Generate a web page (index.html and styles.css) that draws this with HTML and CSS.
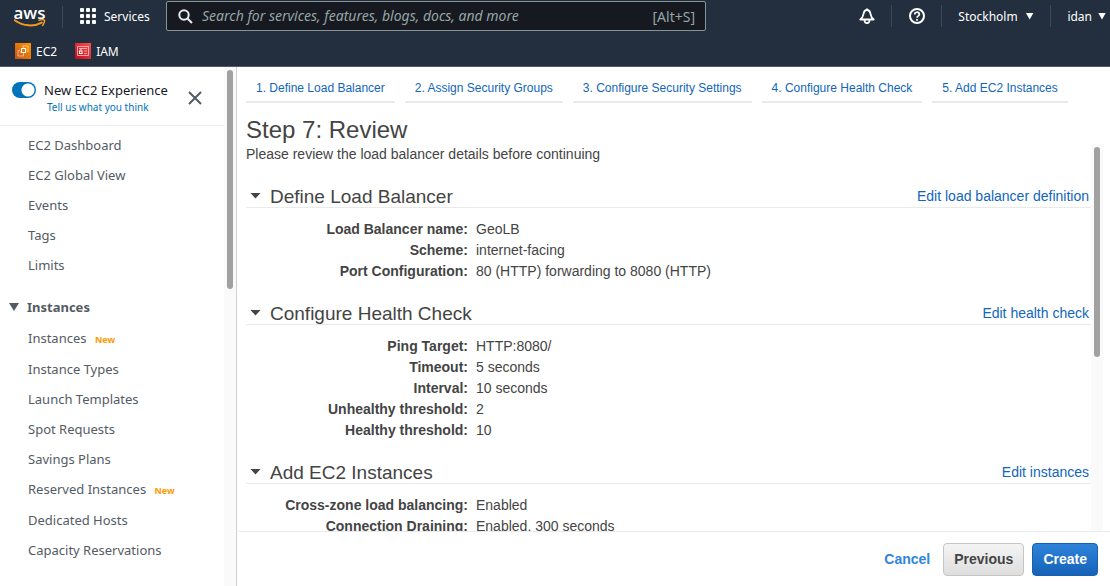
FILE: index.html
```html
<!DOCTYPE html>
<html lang="en">
<head>
<meta charset="utf-8">
<title>Create Load Balancer</title>
<link rel="stylesheet" href="styles.css">
</head>
<body>
<header class="topbar">
  <div class="topbar-main">
    <a class="logo" href="#" aria-label="AWS home">
      <span class="logo-text">aws</span>
      <svg class="logo-smile" viewBox="0 0 32 9" aria-hidden="true"><path d="M.7 1.200C9.500 7.500 20 7.800 27.800 3.600" fill="none" stroke="#f7981d" stroke-width="2" stroke-linecap="round"/><path d="M25 1.300c2.200-.8 4.600-.8 5.300-.2.500.8-.1 3.500-1.700 5.400" fill="none" stroke="#f7981d" stroke-width="1.500" stroke-linecap="round"/></svg>
    </a>
    <button class="services" type="button">
      <svg class="grid-icon" viewBox="0 0 17 17" fill="#fff" aria-hidden="true"><rect width="4" height="4" rx="1"/><rect x="6" width="4" height="4" rx="1"/><rect x="12" width="4" height="4" rx="1"/><rect y="6" width="4" height="4" rx="1"/><rect x="6" y="6" width="4" height="4" rx="1"/><rect x="12" y="6" width="4" height="4" rx="1"/><rect y="12" width="4" height="4" rx="1"/><rect x="6" y="12" width="4" height="4" rx="1"/><rect x="12" y="12" width="4" height="4" rx="1"/></svg>
      <span>Services</span>
    </button>
    <label class="search">
      <svg class="search-icon" viewBox="0 0 15 15" fill="none" stroke="#eaeded" stroke-width="2" aria-hidden="true"><circle cx="6" cy="6" r="4.700"/><path d="M9.500 9.500 14 14"/></svg>
      <input class="search-input" type="text" aria-label="Search" placeholder="Search for services, features, blogs, docs, and more">
      <span class="search-key">[Alt+S]</span>
    </label>
    <nav class="tools" aria-label="Account">
      <button class="tool tool-icon tool-bell" type="button" aria-label="Notifications"><svg viewBox="0 0 16 16" fill="none" stroke="#fff" stroke-width="1.800" stroke-linejoin="round" aria-hidden="true"><path d="M8 .5v1.500M1.300 11.500c1.700-1.300 2.700-3 3.100-5.200C4.800 3.700 5.900 2 8 2s3.200 1.700 3.600 4.300c.4 2.200 1.400 3.900 3.100 5.200zM5.500 12c.1 4.100 4.900 4.100 5 0"/></svg></button>
      <button class="tool tool-icon" type="button" aria-label="Help"><svg viewBox="0 0 16 16" fill="none" stroke="#fff" stroke-width="2" aria-hidden="true"><circle cx="8" cy="8" r="7"/><path d="M5.700 6.500c0-3 4.700-3 4.700-.2C10.400 7.900 8 7.800 8 9.800M8 11v1.800" stroke-width="1.700"/></svg></button>
      <button class="tool tool-region" type="button">Stockholm <span class="caret"></span></button>
      <button class="tool tool-user" type="button">idan <span class="caret"></span></button>
    </nav>
  </div>
  <nav class="favorites" aria-label="Favorites">
    <a href="#"><svg viewBox="0 0 16 16" aria-hidden="true"><defs><linearGradient id="ec2" x1="0" y1="1" x2="1" y2="0"><stop stop-color="#c8511b"/><stop offset="1" stop-color="#f90"/></linearGradient></defs><path fill="url(#ec2)" d="M0 0h16v16H0z"/><g fill="none" stroke="#fff"><rect x="6.500" y="5.500" width="4" height="4"/><path stroke-width=".5" d="M5 7.500H3v5.500h5.500v-2M7.500 4V3h5.500v5.500h-1M8.500 4v1.500M12 7h-1.500M6.500 9H5M8.500 9.500V11"/></g></svg>EC2</a>
    <a href="#"><svg viewBox="0 0 16 16" aria-hidden="true"><defs><linearGradient id="iam" x1="0" y1="1" x2="1" y2="0"><stop stop-color="#bd0816"/><stop offset="1" stop-color="#ff5252"/></linearGradient></defs><path fill="url(#iam)" d="M0 0h16v16H0z"/><g fill="none" stroke="#fff"><path stroke-width=".6" d="M2.500 3.500h11v9h-11zM4 5.500h8"/><rect x="4.500" y="8" width="2.500" height="2.500"/><path stroke-width=".5" d="M5 7.500V6.500h1.500v1M9 8h3M9 10.500h3"/></g></svg>IAM</a>
  </nav>
</header>

<div class="shell">
  <aside class="sidebar">
    <div class="sidebar-content">
      <div class="experience">
        <input class="switch" id="experience" type="checkbox" role="switch" checked>
        <div class="experience-text">
          <label for="experience">New EC2 Experience</label>
          <a href="#">Tell us what you think</a>
        </div>
        <button class="close" type="button" aria-label="Close"><svg viewBox="0 0 14 14" fill="none" stroke="#545b64" stroke-width="2" aria-hidden="true"><path d="m1 1 12 12M13 1 1 13"/></svg></button>
      </div>
      <nav class="side-nav" aria-label="EC2">
        <a href="#">EC2 Dashboard</a>
        <a href="#">EC2 Global View</a>
        <a href="#">Events</a>
        <a href="#">Tags</a>
        <a href="#">Limits</a>
        <button class="side-group" type="button"><span class="caret"></span>Instances</button>
        <a class="has-badge" href="#">Instances <span class="badge">New</span></a>
        <a href="#">Instance Types</a>
        <a href="#">Launch Templates</a>
        <a href="#">Spot Requests</a>
        <a href="#">Savings Plans</a>
        <a class="has-badge" href="#">Reserved Instances <span class="badge">New</span></a>
        <a href="#">Dedicated Hosts</a>
        <a href="#">Capacity Reservations</a>
      </nav>
    </div>
    <div class="track"><div class="thumb thumb-side"></div></div>
  </aside>

  <main class="main">
    <nav class="steps" aria-label="Steps">
      <a href="#">1. Define Load Balancer</a>
      <a href="#">2. Assign Security Groups</a>
      <a href="#">3. Configure Security Settings</a>
      <a href="#">4. Configure Health Check</a>
      <a href="#">5. Add EC2 Instances</a>
    </nav>
    <h1>Step 7: Review</h1>
    <div class="review">
      <div class="review-content">
        <p>Please review the load balancer details before continuing</p>
        <section>
          <div class="section-head"><span class="fold"></span><h2>Define Load Balancer</h2><a href="#">Edit load balancer definition</a></div>
          <dl>
            <dt>Load Balancer name:</dt><dd>GeoLB</dd>
            <dt>Scheme:</dt><dd>internet-facing</dd>
            <dt>Port Configuration:</dt><dd>80 (HTTP) forwarding to 8080 (HTTP)</dd>
          </dl>
        </section>
        <section>
          <div class="section-head"><span class="fold"></span><h2>Configure Health Check</h2><a href="#">Edit health check</a></div>
          <dl>
            <dt>Ping Target:</dt><dd>HTTP:8080/</dd>
            <dt>Timeout:</dt><dd>5 seconds</dd>
            <dt>Interval:</dt><dd>10 seconds</dd>
            <dt>Unhealthy threshold:</dt><dd>2</dd>
            <dt>Healthy threshold:</dt><dd>10</dd>
          </dl>
        </section>
        <section>
          <div class="section-head"><span class="fold"></span><h2>Add EC2 Instances</h2><a href="#">Edit instances</a></div>
          <dl>
            <dt>Cross-zone load balancing:</dt><dd>Enabled</dd>
            <dt>Connection Draining:</dt><dd>Enabled, 300 seconds</dd>
          </dl>
        </section>
      </div>
      <div class="track"><div class="thumb thumb-main"></div></div>
    </div>
    <footer class="actions">
      <a href="#">Cancel</a>
      <button class="btn" type="button">Previous</button>
      <button class="btn btn-primary" type="button">Create</button>
    </footer>
  </main>
</div>
</body>
</html>
```
FILE: styles.css
```css
* { box-sizing: border-box; }

body {
  margin: 0;
  height: 100vh;
  display: flex;
  flex-direction: column;
  overflow: hidden;
  background: #fff;
  color: #444;
  font-family: "Liberation Sans", Arial, sans-serif;
  font-size: 14px;
  line-height: 21px;
}

h1, h2, p, dl, dd { margin: 0; font-weight: 400; }
a { color: #1166bb; text-decoration: none; }
button { border: 0; padding: 0; background: none; font: inherit; color: inherit; }
svg { display: block; flex: none; }

.topbar {
  flex: none;
  background: #232f3e;
  border-bottom: 1px solid #545b64;
  color: #fff;
  font-family: "Noto Sans", sans-serif;
  font-size: 12px;
}
.topbar-main { display: flex; align-items: center; height: 32px; }

.logo {
  display: flex;
  flex-direction: column;
  align-items: center;
  width: 63px;
  height: 22px;
  margin-top: 1px;
  border-right: 1px solid #414750;
  padding-right: 3px;
  color: #fff;
}
.logo-text { font: 600 17px/14px "Open Sans", sans-serif; }
.logo-smile { width: 32px; height: 9px; margin-top: -1px; }

.services { display: flex; align-items: center; gap: 7px; width: 103px; padding-left: 17px; }
.grid-icon { width: 17px; height: 17px; }

.search {
  display: flex;
  align-items: center;
  flex: 0 1 540px;
  height: 30px;
  padding: 0 10px 0 11px;
  background: #16191f;
  border: 1px solid #879596;
  border-radius: 2px;
  color: #95a5a6;
}
.search-icon { width: 15px; height: 15px; }
.search-input {
  flex: 1;
  min-width: 0;
  margin-left: 9px;
  padding: 0;
  border: 0;
  outline: 0;
  background: none;
  font: italic 14px/20px "Noto Sans", sans-serif;
}
.search-input::placeholder { color: #95a5a6; opacity: 1; }
.search-key { font-size: 14px; }

.tools { display: flex; margin-left: auto; }
.tool {
  display: flex;
  align-items: center;
  justify-content: center;
  gap: 8px;
  height: 22px;
}
.tool + .tool { border-left: 1px solid #414750; }
.tool-icon { width: 50px; }
.tool-icon svg { width: 16px; height: 16px; }
.tool-bell { padding-left: 2px; }
.tool-region { width: 109px; }
.tool-user { width: 60px; padding-right: 4px; justify-content: flex-end; gap: 6px; }

.caret {
  width: 8px;
  height: 7px;
  background: currentColor;
  clip-path: polygon(0 0, 100% 0, 50% 100%);
}

.favorites { display: flex; gap: 18px; padding: 9px 15px 5px; }
.favorites a { display: flex; align-items: center; gap: 5px; height: 20px; color: #fff; }
.favorites svg { width: 16px; height: 16px; }

.shell { display: flex; flex: 1; min-height: 0; }

.sidebar {
  display: flex;
  flex: none;
  width: 237px;
  border-right: 1px solid #cbd2d6;
  overflow: hidden;
  font-family: "Noto Sans", sans-serif;
  font-size: 13px;
}
.sidebar-content { flex: 1; }
.track { flex: none; width: 12px; padding: 3px; background: #fafafa; }
.thumb { width: 6px; border-radius: 3px; background: #a1a1a1; }
.thumb-side { height: 219px; }
.thumb-main { height: 210px; }

.experience {
  display: flex;
  height: 59px;
  padding: 14px 0 0 12px;
  border-bottom: 1px solid #eaeded;
}
.switch {
  appearance: none;
  flex: none;
  width: 24px;
  height: 16px;
  margin: 1px 8px 0 0;
  border-radius: 8px;
  background: radial-gradient(circle at 16px 8px, #fff 6px, #0073bb 7px);
}
.experience-text { display: flex; flex-direction: column; color: #16191f; line-height: 18px; }
.experience-text a { padding-left: 3px; color: #0073bb; font-size: 10px; line-height: 16px; }
.close { align-self: flex-start; margin: 10px 0 0 20px; }
.close svg { width: 14px; height: 14px; }

.side-nav { display: flex; flex-direction: column; padding: 4px 0; }
.side-nav a { height: 30px; padding-left: 28px; color: #545b64; line-height: 30px; }
.side-nav .has-badge { height: 31px; }
.side-group {
  display: flex;
  align-items: center;
  gap: 8px;
  height: 30px;
  margin: 12px 0 1px 9px;
  color: #545b64;
  font-weight: 700;
}
.side-group .caret { width: 10px; height: 8px; }
.badge { margin-left: 5px; color: #f90; font-size: 9px; font-weight: 700; }

.main { display: flex; flex-direction: column; flex: 1; min-width: 0; padding-left: 1px; }
.steps { display: flex; flex: none; gap: 10px; padding: 0 8px; }
.steps a {
  height: 36px;
  padding: 0 10px;
  border-bottom: 2px solid #eaeaea;
  font-size: 12px;
  line-height: 42px;
  white-space: nowrap;
}
h1 { flex: none; padding: 12px 8px 0; font-size: 24px; line-height: 29px; }

.review { display: flex; flex: 1; min-height: 0; margin-right: 7px; overflow: hidden; }
.review-content { flex: 1; padding-left: 8px; }
.section-head {
  display: flex;
  align-items: center;
  height: 26px;
  margin: 17px 0 11px;
  padding-top: 4px;
  border-bottom: 1px solid #eaeaea;
}
.section-head h2 { flex: 1; font-size: 19px; line-height: 22px; }
.section-head a { padding-right: 2px; }
.fold {
  width: 11px;
  height: 6px;
  margin: 0 9px 2px 4px;
  background: #444;
  clip-path: polygon(0 0, 100% 0, 50% 100%);
}
dl { display: grid; grid-template-columns: 222px 1fr; column-gap: 8px; }
dt { font-weight: 700; text-align: right; }

.actions {
  display: flex;
  flex: none;
  align-items: center;
  justify-content: flex-end;
  gap: 8px;
  height: 55px;
  padding-right: 12px;
  border-top: 1px solid #eaeaea;
  font-weight: 700;
}
.actions a { padding-right: 5px; color: #2e86de; }
.btn {
  height: 33px;
  padding: 0 10px;
  border: 1px solid #c5c5c5;
  border-radius: 4px;
  background: linear-gradient(#f4f4f4, #dedede);
}
.btn-primary {
  border-color: #1560b3;
  background: linear-gradient(#2e84da, #1562b8);
  color: #fff;
}
```
